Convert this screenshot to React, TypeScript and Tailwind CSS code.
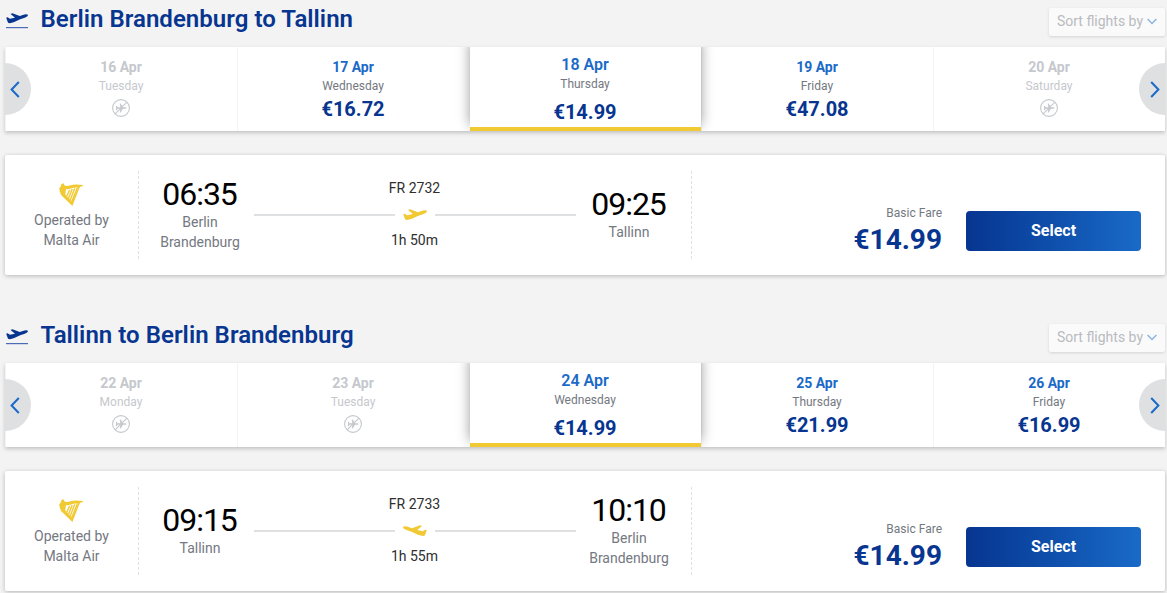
import clsx from 'clsx';

type Day = {
  date: string;
  weekday: string;
  price?: string;
  selected?: boolean;
};

type Flight = {
  number: string;
  duration: string;
  departTime: string;
  departCity: string;
  arriveTime: string;
  arriveCity: string;
  price: string;
  inbound?: boolean;
};

const outboundDays: Day[] = [
  { date: '16 Apr', weekday: 'Tuesday' },
  { date: '17 Apr', weekday: 'Wednesday', price: '€16.72' },
  { date: '18 Apr', weekday: 'Thursday', price: '€14.99', selected: true },
  { date: '19 Apr', weekday: 'Friday', price: '€47.08' },
  { date: '20 Apr', weekday: 'Saturday' },
];

const inboundDays: Day[] = [
  { date: '22 Apr', weekday: 'Monday' },
  { date: '23 Apr', weekday: 'Tuesday' },
  { date: '24 Apr', weekday: 'Wednesday', price: '€14.99', selected: true },
  { date: '25 Apr', weekday: 'Thursday', price: '€21.99' },
  { date: '26 Apr', weekday: 'Friday', price: '€16.99' },
];

const PLANE =
  'M0.2 5.2 L1.8 4.7 L4.2 6.2 L9.8 5 L5 1 L7 0.3 L15 3.2 L20 1.6 Q23.8 0.6 24 2.4 Q23.8 3.8 20.5 5.1 L15.5 6.7 L9 9.8 Q4.5 11.6 2.2 10.6 Z';

function TakeoffIcon() {
  return (
    <svg width="22" height="16" viewBox="0 0 22 16" fill="#073590">
      <path d={PLANE} transform="scale(0.917 0.93)" />
      <rect y="14" width="22" height="1.2" fill="#4a6bb5" />
    </svg>
  );
}

function PlaneIcon({ flip }: { flip?: boolean }) {
  return (
    <svg width="24" height="12" viewBox="0 0 24 12" fill="#f1c933" className={clsx(flip && '-scale-x-100')}>
      <path d={PLANE} />
    </svg>
  );
}

function NoFlightIcon() {
  return (
    <svg width="18" height="18" viewBox="0 0 18 18" fill="none" stroke="#c5c8cd">
      <circle cx="9" cy="9" r="8.4" strokeWidth="1.1" />
      <path
        d="M4.2 9 L3.8 6.8 L4.6 6.8 L5.8 8.2 H8.4 L7.7 4.4 H8.7 L11 8.2 H13.2 Q14.6 8.5 14.6 9 Q14.6 9.5 13.2 9.8 H11 L8.7 13.6 H7.7 L8.4 9.8 H5.8 L4.6 11.2 L3.8 11.2 Z"
        fill="#c5c8cd"
        stroke="none"
      />
      <path d="M3.1 14.9 L14.9 3.1" strokeWidth="1.1" />
    </svg>
  );
}

function HarpLogo() {
  return (
    <svg width="24" height="24" viewBox="0 0 24 24" fill="#f1c933">
      <path d="M2.2 1.6 Q3 0 4.8 0.6 Q5.6 1.3 5.1 2.3 Q8 3.5 11.5 2.2 Q16 0.7 24 2 L23.8 3 Q21.6 3.1 20.5 4.8 L13.4 23 L1.8 11.7 L1.6 10 L0.5 8.8 L1 7.2 L0 6.4 Q0.3 4.5 1.8 3.6 Z" />
      {/* gap between the frame and the strings */}
      <path d="M7 6 Q9.4 6.6 12 5.6 Q16 4.2 19.2 4.8 L13 18.6 L6.2 11.6 Z" fill="#fff" />
      <g fill="none" stroke="#f1c933" strokeWidth="1.4">
        <path d="M10.6 7 L7.8 13" />
        <path d="M13.2 6 L9.6 15" />
        <path d="M15.8 5.2 L11.2 17" />
        <path d="M18.4 4.8 L12.8 18.6" />
      </g>
    </svg>
  );
}

function Chevron({ direction }: { direction: 'left' | 'right' }) {
  return (
    <svg width="10" height="17" viewBox="0 0 10 17" fill="none" stroke="#1a6ac8" strokeWidth="2">
      <path d={direction === 'left' ? 'M8.8 1 L1.6 8.5 L8.8 16' : 'M1.2 1 L8.4 8.5 L1.2 16'} />
    </svg>
  );
}

function DayCell({ day }: { day: Day }) {
  const disabled = !day.price;

  if (day.selected) {
    return (
      <button className="relative z-10 ml-px flex flex-col items-center border-b-4 border-[#f1c933] bg-white pt-2 pr-px shadow-[0_-6px_12px_rgba(0,0,0,0.4)]">
        <span className="text-base leading-[19px] font-semibold text-[#1a6ac8]">{day.date}</span>
        <span className="text-xs leading-5 text-[#747881]">{day.weekday}</span>
        <span className="mt-[6px] text-xl leading-6 font-bold text-[#073590]">{day.price}</span>
      </button>
    );
  }

  return (
    <button
      className={clsx(
        'flex flex-col items-center border-l border-[#f4f4f4] pt-[11px] pr-px',
        disabled ? 'text-[#c5c8cd]' : 'text-[#747881]',
      )}
    >
      <span className={clsx('text-sm leading-[18px] font-bold', !disabled && 'text-[#1a6ac8]')}>{day.date}</span>
      <span className="text-xs leading-5">{day.weekday}</span>
      {disabled ? (
        <span className="mt-[3px]">
          <NoFlightIcon />
        </span>
      ) : (
        <span className="text-xl leading-[26px] font-bold text-[#073590]">{day.price}</span>
      )}
    </button>
  );
}

function DateCarousel({ days }: { days: Day[] }) {
  return (
    <div className="shadow-[0_2px_4px_rgba(0,0,0,0.2)]">
      <div className="relative h-[84px] overflow-hidden bg-white">
        <div className="grid h-full grid-cols-5">
          {days.map((day) => (
            <DayCell key={day.date} day={day} />
          ))}
        </div>
        <button className="absolute top-4 left-0 flex h-[52px] w-[26px] items-center rounded-r-full bg-[#dfe0e2] pl-[5px]">
          <Chevron direction="left" />
        </button>
        <button className="absolute top-4 right-0 flex h-[52px] w-[26px] items-center justify-end rounded-l-full bg-[#dfe0e2] pr-[5px]">
          <Chevron direction="right" />
        </button>
      </div>
    </div>
  );
}

function Stop({ time, city }: { time: string; city: string }) {
  return (
    <div className="w-[92px] pb-0.5 text-center">
      <div className="pr-px text-[32px] leading-9 tracking-[-1px] text-black">{time}</div>
      <div className="text-sm leading-5 text-[#747881]">{city}</div>
    </div>
  );
}

function FlightCard({ flight }: { flight: Flight }) {
  return (
    <div className="mt-6 flex h-[120px] items-center rounded-[2px] bg-white shadow-[0_1px_4px_rgba(0,0,0,0.25)]">
      <div className="flex w-[133px] flex-col items-center pt-0.5">
        <div className="pr-0.5">
          <HarpLogo />
        </div>
        <div className="mt-[3px] w-20 text-center text-sm leading-5 text-[#747881]">Operated by Malta Air</div>
      </div>
      <div className="flex h-[88px] w-[554px] items-center justify-between border-x border-dashed border-[#dfe0e2] pr-4 pl-[15px]">
        <Stop time={flight.departTime} city={flight.departCity} />
        <div className="flex w-[322px] flex-col items-center text-sm leading-5 text-[#2e2e2e]">
          <div className="-mt-0.5">{flight.number}</div>
          <div className="flex h-[34px] w-full items-center justify-between">
            <div className="h-0.5 w-[141px] bg-[#dfe0e2]" />
            <PlaneIcon flip={flight.inbound} />
            <div className="h-0.5 w-[141px] bg-[#dfe0e2]" />
          </div>
          <div className="-mt-0.5">{flight.duration}</div>
        </div>
        <Stop time={flight.arriveTime} city={flight.arriveCity} />
      </div>
      <div className="flex flex-1 items-center justify-end gap-6 pt-8 pr-6">
        <div className="text-right">
          <div className="text-xs leading-4 text-[#747881]">Basic Fare</div>
          <div className="mt-px text-[28px] leading-9 font-bold text-[#073590]">{flight.price}</div>
        </div>
        <button className="h-10 w-[175px] rounded bg-linear-to-r from-[#073590] to-[#1a6ac8] text-base font-bold text-white">
          Select
        </button>
      </div>
    </div>
  );
}

function Journey({ title, days, flight }: { title: string; days: Day[]; flight: Flight }) {
  return (
    <section className="h-[316px]">
      <header className="flex h-[47px] justify-between">
        <div className="flex items-start gap-[12.5px] pl-px">
          <div className="pt-[13px]">
            <TakeoffIcon />
          </div>
          <h2 className="pt-1 text-2xl leading-[30px] font-semibold tracking-[0.04px] text-[#073590]">{title}</h2>
        </div>
        <button className="mt-2 flex h-7 w-[116px] items-center justify-center gap-1 rounded-[2px] bg-[#fafafa] pb-0.5 text-sm text-[#b9bbbf] shadow-[0_1px_3px_rgba(0,0,0,0.13)]">
          Sort flights by
          <svg width="10" height="7" viewBox="0 0 10 7" fill="none" stroke="#8cb4e4" strokeWidth="1.5">
            <path d="M0.6 1 L5 5.5 L9.4 1" />
          </svg>
        </button>
      </header>
      <DateCarousel days={days} />
      <FlightCard flight={flight} />
    </section>
  );
}

export default function App() {
  return (
    <main className="h-[593px] w-[1167px] overflow-hidden bg-[#f3f3f3] pr-0.5 pl-[5px] font-['Roboto',sans-serif]">
      <Journey
        title="Berlin Brandenburg to Tallinn"
        days={outboundDays}
        flight={{
          number: 'FR 2732',
          duration: '1h 50m',
          departTime: '06:35',
          departCity: 'Berlin Brandenburg',
          arriveTime: '09:25',
          arriveCity: 'Tallinn',
          price: '€14.99',
        }}
      />
      <Journey
        title="Tallinn to Berlin Brandenburg"
        days={inboundDays}
        flight={{
          number: 'FR 2733',
          duration: '1h 55m',
          departTime: '09:15',
          departCity: 'Tallinn',
          arriveTime: '10:10',
          arriveCity: 'Berlin Brandenburg',
          price: '€14.99',
          inbound: true,
        }}
      />
    </main>
  );
}
